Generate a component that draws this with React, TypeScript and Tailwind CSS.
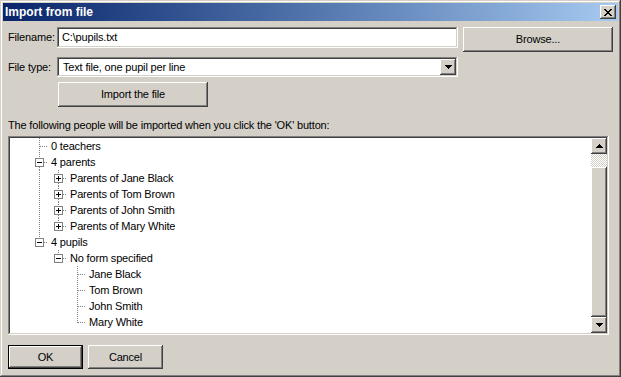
import React from "react";

const RAISED =
  "shadow-[inset_-1px_-1px_#404040,inset_1px_1px_#ffffff,inset_-2px_-2px_#808080,inset_2px_2px_#d4d0c8]";
const SUNKEN =
  "shadow-[inset_-1px_-1px_#ffffff,inset_1px_1px_#808080,inset_-2px_-2px_#d4d0c8,inset_2px_2px_#404040]";

const C1 = 29;
const C2 = 48;
const C3 = 67;

type VSeg = [number, "full" | "top" | "bottom"];
type RowSpec = {
  col: number;
  text: string;
  box?: "plus" | "minus";
  v: VSeg[];
};

const rows: RowSpec[] = [
  { col: C1, text: "0 teachers", v: [[C1, "full"]] },
  { col: C1, text: "4 parents", box: "minus", v: [[C1, "full"], [C2, "bottom"]] },
  { col: C2, text: "Parents of Jane Black", box: "plus", v: [[C1, "full"], [C2, "full"]] },
  { col: C2, text: "Parents of Tom Brown", box: "plus", v: [[C1, "full"], [C2, "full"]] },
  { col: C2, text: "Parents of John Smith", box: "plus", v: [[C1, "full"], [C2, "full"]] },
  { col: C2, text: "Parents of Mary White", box: "plus", v: [[C1, "full"], [C2, "top"]] },
  { col: C1, text: "4 pupils", box: "minus", v: [[C1, "top"], [C2, "bottom"]] },
  { col: C2, text: "No form specified", box: "minus", v: [[C2, "top"], [C3, "bottom"]] },
  { col: C3, text: "Jane Black", v: [[C3, "full"]] },
  { col: C3, text: "Tom Brown", v: [[C3, "full"]] },
  { col: C3, text: "John Smith", v: [[C3, "full"]] },
  { col: C3, text: "Mary White", v: [[C3, "top"]] },
];

function TreeRow({ r }: { r: RowSpec }) {
  const w = r.col + 12;
  const c = r.col;
  return (
    <div className="flex h-[16px] items-center">
      <svg width={w} height={16} className="shrink-0" shapeRendering="crispEdges">
        {r.v.map(([x, kind], i) => {
          let y1 = 0;
          let y2 = 16;
          if (kind === "top") y2 = 9;
          if (kind === "bottom") y1 = 8;
          if (r.box && x === c) {
            if (kind === "top") y2 = 4;
            if (kind === "full") return null;
          }
          if (r.box && x !== c && kind === "bottom") y1 = 13;
          return (
            <line
              key={i}
              x1={x + 0.5}
              x2={x + 0.5}
              y1={y1}
              y2={y2}
              stroke="#808080"
              strokeDasharray="1 1"
            />
          );
        })}
        {r.box && r.v.some(([x, k]) => x === c && k === "full") && (
          <>
            <line x1={c + 0.5} x2={c + 0.5} y1={0} y2={4} stroke="#808080" strokeDasharray="1 1" />
            <line x1={c + 0.5} x2={c + 0.5} y1={13} y2={16} stroke="#808080" strokeDasharray="1 1" />
          </>
        )}
        {r.box ? (
          <>
            <line x1={c + 5} x2={c + 9} y1={8.5} y2={8.5} stroke="#808080" strokeDasharray="1 1" />
            <rect x={c - 4 + 0.5} y={4.5} width={8} height={8} fill="#ffffff" stroke="#808080" />
            <line x1={c - 2} x2={c + 3} y1={8.5} y2={8.5} stroke="#000000" />
            {r.box === "plus" && (
              <line x1={c + 0.5} x2={c + 0.5} y1={6} y2={11} stroke="#000000" />
            )}
          </>
        ) : (
          <line x1={c + 1} x2={c + 9} y1={8.5} y2={8.5} stroke="#808080" strokeDasharray="1 1" />
        )}
      </svg>
      <span className="whitespace-nowrap leading-[16px]">{r.text}</span>
    </div>
  );
}

function ArrowDown() {
  return (
    <svg width={7} height={4} shapeRendering="crispEdges">
      <path d="M0 0h7v1H0zM1 1h5v1H1zM2 2h3v1H2zM3 3h1v1H3z" fill="#000" />
    </svg>
  );
}

function ArrowUp() {
  return (
    <svg width={7} height={4} shapeRendering="crispEdges">
      <path d="M3 0h1v1H3zM2 1h3v1H2zM1 2h5v1H1zM0 3h7v1H0z" fill="#000" />
    </svg>
  );
}

export default function App() {
  return (
    <div className="w-[621px] h-[377px] bg-[#d4d0c8] p-[2px] shadow-[inset_-1px_-1px_#404040,inset_1px_1px_#d4d0c8,inset_-2px_-2px_#808080,inset_2px_2px_#ffffff] font-['Liberation_Sans',Arial,sans-serif] text-[11px] tracking-[-0.17px] text-black overflow-hidden">
      <div className="p-[1px] h-full flex flex-col">
        {/* Title bar */}
        <div className="h-[18px] shrink-0 flex items-center justify-between bg-linear-to-r from-[#0a246a] to-[#a6caf0] pl-[2px] pr-[2px]">
          <span className="text-white font-bold text-[12px] tracking-normal leading-[18px]">Import from file</span>
          <div className={`w-[16px] h-[14px] bg-[#d4d0c8] flex items-center justify-center ${RAISED}`}>
            <svg width={8} height={7} shapeRendering="crispEdges">
              <path
                d="M0 0h2v1H0zM6 0h2v1H6zM1 1h2v1H1zM5 1h2v1H5zM2 2h4v1H2zM3 3h2v1H3zM2 4h4v1H2zM1 5h2v1H1zM5 5h2v1H5zM0 6h2v1H0zM6 6h2v1H6z"
                fill="#000"
              />
            </svg>
          </div>
        </div>

        {/* Body */}
        <div className="pl-[5px] flex flex-col">
          {/* Filename row */}
          <div className="mt-[6px] flex items-start">
            <div className="w-[49px] h-[21px] flex items-center">Filename:</div>
            <div className={`w-[401px] h-[21px] bg-white flex items-center pl-[5px] ${SUNKEN}`}>
              C:\pupils.txt
            </div>
            <div className={`ml-[5px] w-[150px] h-[25px] flex items-center justify-center bg-[#d4d0c8] ${RAISED}`}>
              Browse...
            </div>
          </div>

          {/* File type row */}
          <div className="mt-[5px] flex items-start">
            <div className="w-[49px] h-[20px] flex items-center">File type:</div>
            <div className={`w-[401px] h-[20px] bg-white flex items-center p-[2px] ${SUNKEN}`}>
              <span className="flex-1 pl-[4px]">Text file, one pupil per line</span>
              <div className={`w-[16px] h-[16px] bg-[#d4d0c8] flex items-center justify-center ${RAISED}`}>
                <ArrowDown />
              </div>
            </div>
          </div>

          {/* Import button */}
          <div className="mt-[5px] ml-[50px]">
            <div className={`w-[150px] h-[25px] flex items-center justify-center bg-[#d4d0c8] ${RAISED}`}>
              Import the file
            </div>
          </div>

          <div className="mt-[12px] h-[13px] leading-[13px]">
            The following people will be imported when you click the 'OK' button:
          </div>

          {/* Tree */}
          <div className={`mt-[4px] w-[601px] h-[199px] bg-white p-[2px] flex ${SUNKEN}`}>
            <div className="flex-1 flex flex-col overflow-hidden">
              {rows.map((r, i) => (
                <TreeRow key={i} r={r} />
              ))}
            </div>
            <div className="w-[16px] flex flex-col">
              <div className={`h-[16px] bg-[#d4d0c8] flex items-center justify-center ${RAISED}`}>
                <ArrowUp />
              </div>
              <div className="h-[13px] bg-[image:repeating-conic-gradient(#d4d0c8_0%_25%,#ffffff_0%_50%)] bg-[length:2px_2px]" />
              <div className={`flex-1 bg-[#d4d0c8] ${RAISED}`} />
              <div className={`h-[16px] bg-[#d4d0c8] flex items-center justify-center ${RAISED}`}>
                <ArrowDown />
              </div>
            </div>
          </div>

          {/* Bottom buttons */}
          <div className="mt-[10px] flex">
            <div className="w-[75px] h-[24px] border border-black">
              <div className={`w-full h-full flex items-center justify-center bg-[#d4d0c8] ${RAISED}`}>
                OK
              </div>
            </div>
            <div className={`ml-[5px] w-[75px] h-[24px] flex items-center justify-center bg-[#d4d0c8] ${RAISED}`}>
              Cancel
            </div>
          </div>
        </div>
      </div>
    </div>
  );
}
